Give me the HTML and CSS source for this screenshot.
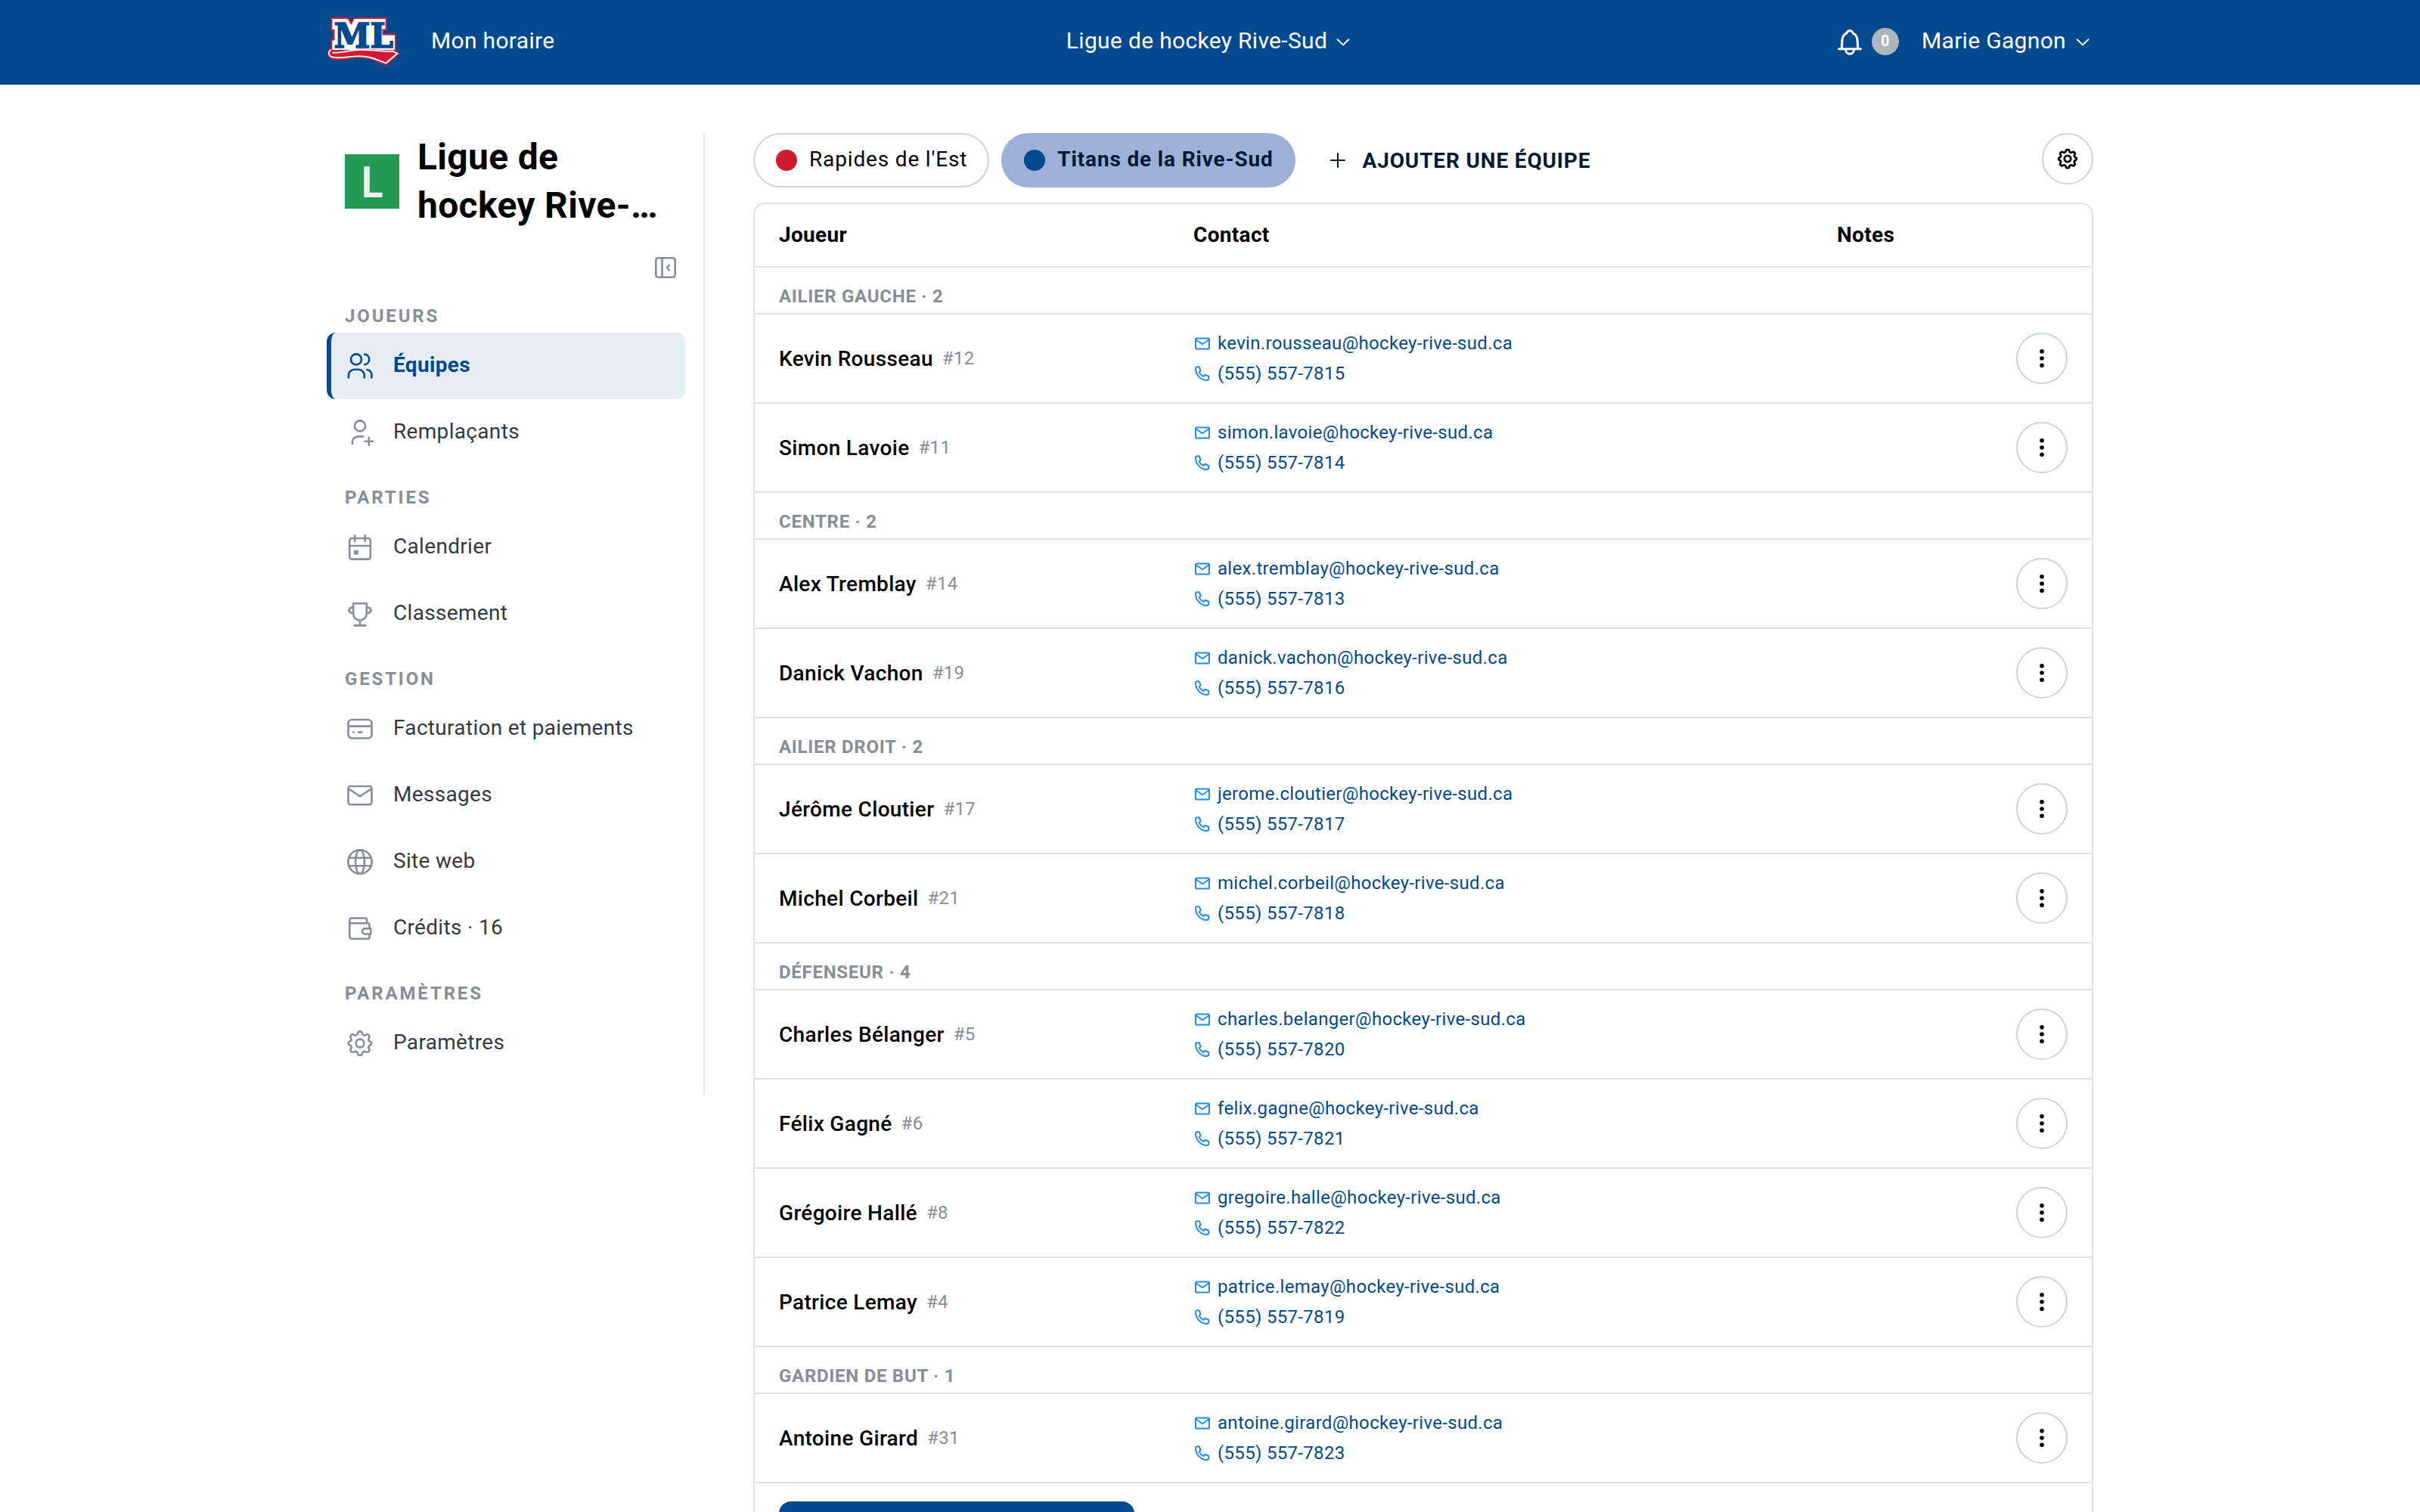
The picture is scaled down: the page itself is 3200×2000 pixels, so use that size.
FILE: index.html
```html
<!DOCTYPE html>
<html lang="fr">
<head>
    <meta charset="UTF-8">
    <meta name="viewport" content="width=device-width, initial-scale=1.0">
    <title>Ligue de hockey Rive-Sud</title>
    <link rel="stylesheet" href="styles.css">
</head>
<body>
    <!-- Shared icons -->
    <svg class="sprite">
        <symbol id="i-mail" viewBox="0 0 24 24">
            <rect x="3" y="4.4" width="18" height="14.2" rx="1.6"/>
            <path d="M3.4 6.2L12 12.2L20.6 6.2"/>
        </symbol>
        <symbol id="i-phone" viewBox="0 0 24 24">
            <path d="M3 4.6A2.4 2.4 0 0 1 5.4 2.2H7.6L9.7 7.4L7.6 9.4C8.8 12 10.9 13.8 13.4 15L15.3 12.8L20.2 14.7V17.6A2.4 2.4 0 0 1 17.8 20C9.6 20 3 12.8 3 4.6Z"/>
        </symbol>
        <symbol id="i-dots" viewBox="0 0 36 36">
            <circle cx="18" cy="8.7" r="2.8"/>
            <circle cx="18" cy="18" r="2.8"/>
            <circle cx="18" cy="27.3" r="2.8"/>
        </symbol>
        <symbol id="i-chevron" viewBox="0 0 20 20">
            <path d="M2.6 6.2L10 13.4L17.4 6.2"/>
        </symbol>
        <symbol id="i-gear" viewBox="0 0 36 36">
            <path d="M15.1 4.6a3 3 0 0 1 5.8 0l.2.8a3 3 0 0 0 4.2 1.7l.7-.3a3 3 0 0 1 4.1 4.1l-.4.7a3 3 0 0 0 1.8 4.2l.7.2a3 3 0 0 1 0 4.2l-.7.2a3 3 0 0 0-1.8 4.2l.4.7a3 3 0 0 1-4.1 4.1l-.7-.3a3 3 0 0 0-4.2 1.7l-.2.8a3 3 0 0 1-5.8 0l-.2-.8a3 3 0 0 0-4.2-1.7l-.7.3a3 3 0 0 1-4.1-4.1l.4-.7a3 3 0 0 0-1.8-4.2l-.7-.2a3 3 0 0 1 0-4.2l.7-.2a3 3 0 0 0 1.8-4.2l-.4-.7a3 3 0 0 1 4.1-4.1l.7.3a3 3 0 0 0 4.2-1.7z"/>
            <circle cx="18" cy="18" r="5.4"/>
        </symbol>
    </svg>

    <header class="navbar">
        <div class="navbar-inner">
            <div class="nav-left">
                <svg class="logo" viewBox="12 22 98 68">
                    <path fill="#fff" stroke="#d01c30" stroke-width="2" d="M18.300 25H40.200L44.300 32L48.200 25H90.700V40.500H86.500V46.500H103V68H18.300V53.500H21.500V41H18.300Z"/>
                    <text class="logo-letters" x="21.500" y="63.500" textLength="78.500" lengthAdjust="spacingAndGlyphs">ML</text>
                    <path fill="#d01c30" d="M17 65C11 68 11 77 20 79.500C34 82 47 76 64 78.500C75 80 82 85 91 87.500L109.500 71.500L100 67.500C78 68 62 63 45 67L20 68Z"/>
                    <path fill="#d01c30" stroke="#fff" stroke-width="1.800" d="M17 67C13 71 15 76 21 76.800C34 79 48 73.500 64 76C75 77.500 83 82 90.500 84.500L105.500 71.700L99 68.700C78 70 66 64.500 47 67.500C37 69 29 71.500 20 70.500"/>
                </svg>
                <a class="nav-link">Mon horaire</a>
            </div>
            <a class="nav-link nav-center">Ligue de hockey Rive-Sud<svg class="chevron"><use href="#i-chevron"/></svg></a>
            <div class="nav-right">
                <svg class="bell" viewBox="0 0 36 36">
                    <path d="M3.500 27.800H32.500M7 27.800C8 24 7.500 20 8 15.500C8.500 11 10.500 8.500 13.500 7.200C14.500 4.500 16 3.400 18 3.400S21.500 4.500 22.500 7.200C25.500 8.500 27.500 11 28 15.500C28.500 20 28 24 29 27.800M12.500 28.500C12.500 32 15 34.300 18 34.300S23.500 32 23.500 28.500"/>
                </svg>
                <span class="badge">0</span>
                <a class="nav-link">Marie Gagnon<svg class="chevron"><use href="#i-chevron"/></svg></a>
            </div>
        </div>
    </header>

    <div class="page">
        <aside class="sidebar">
            <div class="league">
                <div class="league-logo">L</div>
                <h1 class="league-name">Ligue de hockey Rive-Sud</h1>
            </div>
            <div class="collapse">
                <svg class="collapse-icon" viewBox="0 0 32 32">
                    <rect x="3.300" y="3.300" width="25.400" height="25.400" rx="3"/>
                    <path d="M11.500 3.300V28.700M20.800 12.800L17.900 16L20.800 19.200"/>
                </svg>
            </div>

            <div class="menu-title first">Joueurs</div>
            <a class="menu-item active">
                <svg class="icon" viewBox="0 0 36 36"><circle cx="13" cy="9.400" r="7"/><path d="M24.200 2.600C27.600 3 30.200 5.800 30.200 9.400S27.600 15.800 24.200 16.200M2.900 33.400V30.500A7.800 7.800 0 0 1 10.700 22.700H16A7.800 7.800 0 0 1 23.800 30.500V33.400M27.400 23C31 23.700 33.400 26.500 33.400 30.300V33.400"/></svg>
                Équipes
            </a>
            <a class="menu-item">
                <svg class="icon" viewBox="0 0 36 36"><circle cx="18" cy="9.400" r="7"/><path d="M7.900 33V31A7.600 7.600 0 0 1 15.500 23.400H22M29.800 24.500V35M24.500 29.700H35"/></svg>
                Remplaçants
            </a>

            <div class="menu-title">Parties</div>
            <a class="menu-item">
                <svg class="icon" viewBox="0 0 36 36"><rect x="4.200" y="6" width="27.600" height="27.600" rx="3"/><path d="M4.200 16H31.800M11.300 2.400V10M24.700 2.400V10"/><rect class="solid" x="11.300" y="23" width="3.400" height="3.400"/></svg>
                Calendrier
            </a>
            <a class="menu-item">
                <svg class="icon" viewBox="0 0 36 36"><path d="M9.200 4.200H26.800V17.500C26.800 22.700 23 26.500 18 26.500S9.200 22.700 9.200 17.500ZM9.200 10.400A3.500 3.500 0 1 0 9.200 16M26.800 10.400A3.500 3.500 0 1 1 26.800 16M18 26.500V33.400M10.500 33.400H25.500"/></svg>
                Classement
            </a>

            <div class="menu-title">Gestion</div>
            <a class="menu-item">
                <svg class="icon" viewBox="0 0 36 36"><rect x="2.500" y="6" width="31" height="24.500" rx="5"/><path d="M2.500 14.600H33.500M9.500 22.600H9.600M16 22.600H20.300"/></svg>
                Facturation et paiements
            </a>
            <a class="menu-item">
                <svg class="icon" viewBox="0 0 36 36"><rect x="2.500" y="6" width="31" height="24.200" rx="3"/><path d="M3.300 9.500L18 19.500L32.700 9.500"/></svg>
                Messages
            </a>
            <a class="menu-item">
                <svg class="icon" viewBox="0 0 36 36"><circle cx="18" cy="18" r="15.700"/><ellipse cx="18" cy="18" rx="6" ry="15.700"/><path d="M3.500 12.700H32.500M3.500 23.300H32.500"/></svg>
                Site web
            </a>
            <a class="menu-item">
                <svg class="icon" viewBox="0 0 36 36"><path d="M27 11V6.500A2 2 0 0 0 25 4.500H6.600A2.300 2.300 0 0 0 4.300 6.800V28.700A3 3 0 0 0 7.300 31.700H28.500A2 2 0 0 0 30.500 29.700V26M4.300 8.700A2.300 2.300 0 0 0 6.600 11.200H28.500A2 2 0 0 1 30.500 13.200V18M32.200 18.300H24.500A3.500 3.500 0 0 0 24.500 25.500H32.200Z"/></svg>
                Crédits · 16
            </a>

            <div class="menu-title">Paramètres</div>
            <a class="menu-item">
                <svg class="icon"><use href="#i-gear"/></svg>
                Paramètres
            </a>
        </aside>

        <main class="content">
            <div class="tabs">
                <button class="tab"><span class="dot dot-red"></span>Rapides de l'Est</button>
                <button class="tab selected"><span class="dot dot-blue"></span>Titans de la Rive-Sud</button>
                <button class="add-team">
                    <svg class="plus" viewBox="0 0 20 20"><path d="M10 1V19M1 10H19"/></svg>
                    Ajouter une équipe
                </button>
                <button class="round-btn settings"><svg class="gear"><use href="#i-gear"/></svg></button>
            </div>

            <div class="roster">
                <div class="row head">
                    <div>Joueur</div>
                    <div>Contact</div>
                    <div>Notes</div>
                </div>

                <div class="group">Ailier gauche · 2</div>
                <div class="row player">
                    <div class="name">Kevin Rousseau <span class="number">#12</span></div>
                    <div class="contact">
                        <a><svg><use href="#i-mail"/></svg>kevin.rousseau@hockey-rive-sud.ca</a>
                        <a><svg><use href="#i-phone"/></svg>(555) 557-7815</a>
                    </div>
                    <div></div>
                    <button class="round-btn"><svg class="dots"><use href="#i-dots"/></svg></button>
                </div>
                <div class="row player">
                    <div class="name">Simon Lavoie <span class="number">#11</span></div>
                    <div class="contact">
                        <a><svg><use href="#i-mail"/></svg>simon.lavoie@hockey-rive-sud.ca</a>
                        <a><svg><use href="#i-phone"/></svg>(555) 557-7814</a>
                    </div>
                    <div></div>
                    <button class="round-btn"><svg class="dots"><use href="#i-dots"/></svg></button>
                </div>

                <div class="group">Centre · 2</div>
                <div class="row player">
                    <div class="name">Alex Tremblay <span class="number">#14</span></div>
                    <div class="contact">
                        <a><svg><use href="#i-mail"/></svg>alex.tremblay@hockey-rive-sud.ca</a>
                        <a><svg><use href="#i-phone"/></svg>(555) 557-7813</a>
                    </div>
                    <div></div>
                    <button class="round-btn"><svg class="dots"><use href="#i-dots"/></svg></button>
                </div>
                <div class="row player">
                    <div class="name">Danick Vachon <span class="number">#19</span></div>
                    <div class="contact">
                        <a><svg><use href="#i-mail"/></svg>danick.vachon@hockey-rive-sud.ca</a>
                        <a><svg><use href="#i-phone"/></svg>(555) 557-7816</a>
                    </div>
                    <div></div>
                    <button class="round-btn"><svg class="dots"><use href="#i-dots"/></svg></button>
                </div>

                <div class="group">Ailier droit · 2</div>
                <div class="row player">
                    <div class="name">Jérôme Cloutier <span class="number">#17</span></div>
                    <div class="contact">
                        <a><svg><use href="#i-mail"/></svg>jerome.cloutier@hockey-rive-sud.ca</a>
                        <a><svg><use href="#i-phone"/></svg>(555) 557-7817</a>
                    </div>
                    <div></div>
                    <button class="round-btn"><svg class="dots"><use href="#i-dots"/></svg></button>
                </div>
                <div class="row player">
                    <div class="name">Michel Corbeil <span class="number">#21</span></div>
                    <div class="contact">
                        <a><svg><use href="#i-mail"/></svg>michel.corbeil@hockey-rive-sud.ca</a>
                        <a><svg><use href="#i-phone"/></svg>(555) 557-7818</a>
                    </div>
                    <div></div>
                    <button class="round-btn"><svg class="dots"><use href="#i-dots"/></svg></button>
                </div>

                <div class="group">Défenseur · 4</div>
                <div class="row player">
                    <div class="name">Charles Bélanger <span class="number">#5</span></div>
                    <div class="contact">
                        <a><svg><use href="#i-mail"/></svg>charles.belanger@hockey-rive-sud.ca</a>
                        <a><svg><use href="#i-phone"/></svg>(555) 557-7820</a>
                    </div>
                    <div></div>
                    <button class="round-btn"><svg class="dots"><use href="#i-dots"/></svg></button>
                </div>
                <div class="row player">
                    <div class="name">Félix Gagné <span class="number">#6</span></div>
                    <div class="contact">
                        <a><svg><use href="#i-mail"/></svg>felix.gagne@hockey-rive-sud.ca</a>
                        <a><svg><use href="#i-phone"/></svg>(555) 557-7821</a>
                    </div>
                    <div></div>
                    <button class="round-btn"><svg class="dots"><use href="#i-dots"/></svg></button>
                </div>
                <div class="row player">
                    <div class="name">Grégoire Hallé <span class="number">#8</span></div>
                    <div class="contact">
                        <a><svg><use href="#i-mail"/></svg>gregoire.halle@hockey-rive-sud.ca</a>
                        <a><svg><use href="#i-phone"/></svg>(555) 557-7822</a>
                    </div>
                    <div></div>
                    <button class="round-btn"><svg class="dots"><use href="#i-dots"/></svg></button>
                </div>
                <div class="row player">
                    <div class="name">Patrice Lemay <span class="number">#4</span></div>
                    <div class="contact">
                        <a><svg><use href="#i-mail"/></svg>patrice.lemay@hockey-rive-sud.ca</a>
                        <a><svg><use href="#i-phone"/></svg>(555) 557-7819</a>
                    </div>
                    <div></div>
                    <button class="round-btn"><svg class="dots"><use href="#i-dots"/></svg></button>
                </div>

                <div class="group">Gardien de but · 1</div>
                <div class="row player">
                    <div class="name">Antoine Girard <span class="number">#31</span></div>
                    <div class="contact">
                        <a><svg><use href="#i-mail"/></svg>antoine.girard@hockey-rive-sud.ca</a>
                        <a><svg><use href="#i-phone"/></svg>(555) 557-7823</a>
                    </div>
                    <div></div>
                    <button class="round-btn"><svg class="dots"><use href="#i-dots"/></svg></button>
                </div>

                <div class="roster-footer">
                    <button class="primary-btn"></button>
                </div>
            </div>
        </main>
    </div>
</body>
</html>
```
FILE: styles.css
```css
* {
    box-sizing: border-box;
}
body {
    margin: 0;
    height: 2000px;
    overflow: hidden;
    font-family: Roboto, sans-serif;
    font-size: 28px;
    letter-spacing: 0.32px;
    color: #000;
    background-color: #fff;
}
button {
    font: inherit;
    letter-spacing: inherit;
    color: inherit;
    background: none;
    border: none;
    padding: 0;
    cursor: pointer;
}
svg {
    display: block;
    flex-shrink: 0;
    fill: none;
    stroke: currentColor;
    stroke-width: 2.6;
    stroke-linecap: round;
    stroke-linejoin: round;
}
.sprite {
    display: none;
}

/* Navbar */
.navbar {
    height: 112px;
    background-color: #024a8d;
    border-bottom: 2px solid #02437f;
    color: #fff;
    font-size: 30px;
}
.navbar-inner {
    width: 2336px;
    height: 110px;
    margin: 0 auto;
    display: grid;
    grid-template-columns: 1fr auto 1fr;
    align-items: center;
}
.nav-left, .nav-right {
    display: flex;
    align-items: center;
}
.nav-right {
    justify-content: flex-end;
}
.nav-link {
    display: flex;
    align-items: center;
    line-height: 36px;
    padding-bottom: 3px;
}
.logo {
    width: 98px;
    height: 68px;
    margin-right: 40px;
    stroke: none;
    stroke-linejoin: miter;
    overflow: visible;
}
.logo-letters {
    font-family: "DejaVu Serif", serif;
    font-weight: bold;
    font-size: 45px;
    letter-spacing: 0;
    fill: #024a8d;
    stroke: #024a8d;
    stroke-width: 1.6px;
}
.chevron {
    width: 20px;
    height: 20px;
    margin: 4px 4px 0 12px;
    stroke-width: 2;
}
.nav-center .chevron {
    margin-left: 11px;
}
.bell {
    width: 36px;
    height: 36px;
    margin-right: 11px;
    stroke-width: 3;
}
.badge {
    width: 36px;
    height: 36px;
    margin-right: 30px;
    border-radius: 50%;
    background-color: #adb5bd;
    font-size: 20px;
    font-weight: 700;
    line-height: 34px;
    text-align: center;
}

/* Layout */
.page {
    width: 2336px;
    margin: 0 auto;
    padding-top: 64px;
    display: flex;
    align-items: flex-start;
}
.sidebar {
    width: 500px;
    padding: 0 24px 24px 0;
    border-right: 2px solid #e9ecef;
    margin-right: 64px;
    flex-shrink: 0;
}
.content {
    flex: 1;
}

/* Sidebar */
.league {
    display: flex;
    align-items: center;
    gap: 24px;
    height: 128px;
    padding-left: 24px;
}
.league-logo {
    width: 72px;
    height: 72px;
    background-color: #229954;
    color: #eee;
    font-family: "Noto Sans", sans-serif;
    font-size: 57px;
    font-weight: 600;
    line-height: 70px;
    text-align: center;
    flex-shrink: 0;
}
.league-name {
    margin: 0;
    font-size: 48px;
    line-height: 64px;
    font-weight: 700;
    width: 330px;
    overflow: hidden;
    display: -webkit-box;
    -webkit-box-orient: vertical;
    -webkit-line-clamp: 2;
}
.collapse {
    display: flex;
    justify-content: flex-end;
    padding: 34px 10px 0 0;
    color: #868e96;
}
.collapse-icon {
    width: 32px;
    height: 32px;
}
.menu-title {
    height: 64px;
    padding: 28px 0 0 24px;
    font-size: 24px;
    line-height: 28px;
    font-weight: 700;
    letter-spacing: 2.84px;
    text-transform: uppercase;
    color: #868e96;
}
.menu-title.first {
    margin-top: 6px;
}
.menu-item {
    display: flex;
    align-items: center;
    height: 88px;
    padding: 0 0 3px 26px;
    gap: 26px;
    color: #343a40;
}
.menu-item .icon {
    width: 36px;
    height: 36px;
    margin-top: 3px;
    color: #868e96;
}
.menu-item.active {
    border-left: 6px solid #024a8d;
    border-radius: 12px;
    padding-left: 20px;
    background-color: #e6edf5;
    color: #024a8d;
    font-weight: 700;
}
.menu-item.active .icon {
    color: #024a8d;
}
.solid {
    fill: currentColor;
}

/* Team tabs */
.tabs {
    display: flex;
    height: 72px;
    margin-bottom: 20px;
    letter-spacing: 0.84px;
}
.tab {
    display: flex;
    align-items: center;
    height: 72px;
    padding: 0 27px 3px 28px;
    border: 2px solid #ced4da;
    border-radius: 36px;
    margin-right: 16px;
}
.tab.selected {
    background-color: #9db0d8;
    border-color: #9db0d8;
    color: #001a33;
    font-weight: 700;
}
.dot {
    width: 28px;
    height: 28px;
    border-radius: 50%;
    margin: 3px 16px 0 0;
}
.dot-red {
    background-color: #d01c30;
}
.dot-blue {
    background-color: #024a8d;
}
.add-team {
    display: flex;
    align-items: center;
    padding-left: 14px;
    color: #001a33;
    font-weight: 700;
    text-transform: uppercase;
}
.plus {
    width: 20px;
    height: 20px;
    margin: 0 23px 0 16px;
    stroke-width: 2;
}
.round-btn {
    width: 68px;
    height: 68px;
    border: 2px solid #ced4da;
    border-radius: 50%;
    display: flex;
    align-items: center;
    justify-content: center;
}
.settings {
    margin-left: auto;
}
.gear {
    width: 28px;
    height: 28px;
    stroke-width: 3.6;
}
.dots {
    width: 36px;
    height: 36px;
    fill: currentColor;
    stroke: none;
}

/* Roster */
.roster {
    height: 1800px;
    border: 2px solid #dee2e6;
    border-radius: 16px;
}
.row {
    display: grid;
    grid-template-columns: 548px 851px 1fr auto;
    align-items: center;
    padding: 0 32px;
    border-bottom: 2px solid #dee2e6;
}
.head {
    height: 84px;
    padding-bottom: 1px;
    font-weight: 700;
}
.group {
    height: 62px;
    padding: 24px 32px 0;
    border-bottom: 2px solid #dee2e6;
    font-size: 24px;
    line-height: 28px;
    font-weight: 700;
    letter-spacing: 0.72px;
    text-transform: uppercase;
    color: #868e96;
}
.player {
    height: 118px;
}
.name {
    display: flex;
    align-items: center;
    font-weight: 500;
}
.number {
    margin-left: 12px;
    font-size: 24px;
    font-weight: 400;
    color: #868e96;
}
.contact {
    font-size: 24px;
    line-height: 40px;
    color: #024a8d;
}
.contact a {
    display: flex;
    align-items: center;
}
.contact svg {
    width: 24px;
    height: 24px;
    margin: 1px 8px 0 0;
    color: #228be6;
    stroke-width: 2;
}
.roster-footer {
    padding: 24px 32px;
}
.primary-btn {
    display: block;
    width: 470px;
    height: 72px;
    border-radius: 16px;
    background-color: #024a8d;
}
```
